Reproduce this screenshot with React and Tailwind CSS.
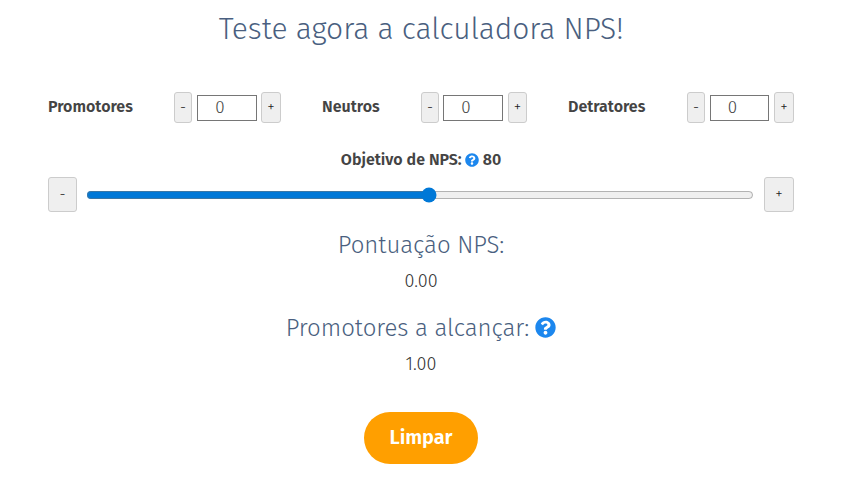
import React, { useState } from 'react';
import { FaQuestionCircle } from 'react-icons/fa';
import { clsx } from 'clsx';

const stepClass =
  'flex items-center justify-center rounded-[3px] border border-[#ccc] bg-[#efefef] text-[#222] text-[15px] font-light';

const fields = [
  { key: 'promotores', title: 'Promotores', label: 'w-[126px]', input: 'ml-[5px] w-[60px]', plus: 'ml-1 w-5' },
  { key: 'neutros', title: 'Neutros', label: 'w-[99px]', input: 'ml-1 w-[60px]', plus: 'ml-[5px] w-[19px]' },
  { key: 'detratores', title: 'Detratores', label: 'w-[119px]', input: 'ml-[5px] w-[59px]', plus: 'ml-[5px] w-5' },
];

const Counter = ({ field, value, onChange }) => (
  <div className="flex items-center">
    <span className={clsx('mb-px whitespace-nowrap text-[16px] leading-6 font-semibold text-[#444]', field.label)}>
      {field.title}
    </span>
    <button className={clsx(stepClass, 'h-[31px] w-[18px]')} onClick={() => onChange(Math.max(0, value - 1))}>
      -
    </button>
    <input
      className={clsx(
        'h-[26px] border border-[#767676] bg-white pr-[14px] text-center text-[17px] leading-6 font-light text-[#444]',
        field.input
      )}
      value={value}
      onChange={(e) => onChange(Number(e.target.value) || 0)}
    />
    <button className={clsx(stepClass, 'h-[31px]', field.plus)} onClick={() => onChange(value + 1)}>
      +
    </button>
  </div>
);

const App = () => {
  const [votes, setVotes] = useState({ promotores: 0, neutros: 0, detratores: 0 });
  const [goal, setGoal] = useState(80);

  const total = votes.promotores + votes.neutros + votes.detratores;
  const score = total ? ((votes.promotores - votes.detratores) / total) * 100 : 0;
  const g = goal / 100;
  const missing = total
    ? Math.max(0, Math.ceil((g * total - votes.promotores + votes.detratores) / (1 - g)))
    : 1;

  const clear = () => {
    setVotes({ promotores: 0, neutros: 0, detratores: 0 });
    setGoal(80);
  };

  return (
    <div className="h-[494px] overflow-hidden bg-white pl-12 font-['Fira_Sans','Noto_Sans',sans-serif]">
      <div className="flex w-[746px] flex-col items-center">
        <h2 className="mt-[9px] h-10 whitespace-nowrap text-[30px] leading-10 font-light tracking-[-0.08px] text-[#4a5f80]">
          Teste agora a calculadora NPS!
        </h2>

        <div className="mt-[43px] flex w-full justify-between">
          {fields.map((field) => (
            <Counter
              key={field.key}
              field={field}
              value={votes[field.key]}
              onChange={(v) => setVotes({ ...votes, [field.key]: v })}
            />
          ))}
        </div>

        <div className="mt-[25px] flex h-6 items-center whitespace-nowrap text-[16px] leading-6 font-semibold text-[#444]">
          <span>Objetivo de NPS:</span>
          <FaQuestionCircle className="mx-[3.5px] mb-px size-3.5 text-[#1c87ee]" />
          <span>{goal}</span>
        </div>

        <div className="mt-[5px] flex w-full items-center">
          <button className={clsx(stepClass, 'h-[35px] w-[29px]')} onClick={() => setGoal(Math.max(60, goal - 1))}>
            -
          </button>
          <input
            type="range"
            min="60"
            max="99"
            value={goal}
            onChange={(e) => setGoal(Number(e.target.value))}
            className="ml-[9.4px] h-4 w-[668px] accent-[#0078d7]"
          />
          <button className={clsx(stepClass, 'ml-auto h-[35px] w-[30px]')} onClick={() => setGoal(Math.min(99, goal + 1))}>
            +
          </button>
        </div>

        <h3 className="mt-[17px] h-8 whitespace-nowrap text-[24px] leading-8 font-light tracking-[-0.05px] text-[#4a5f80]">
          Pontuação NPS:
        </h3>
        <p className="mt-2 h-6 text-[18px] leading-6 font-light text-[#333]">{score.toFixed(2)}</p>

        <h3 className="mt-[19px] flex h-8 items-center whitespace-nowrap text-[24px] leading-8 font-light tracking-[-0.05px] text-[#4a5f80]">
          <span>Promotores a alcançar:</span>
          <FaQuestionCircle className="mb-px ml-1.5 size-[21px] text-[#1c87ee]" />
        </h3>
        <p className="mt-2 h-6 text-[18px] leading-6 font-light text-[#333]">{missing.toFixed(2)}</p>

        <button
          className="mt-9 h-[52px] w-[114px] rounded-full bg-[#ff9f00] pb-0.5 text-[20px] font-semibold tracking-[-0.1px] text-white"
          onClick={clear}
        >
          Limpar
        </button>
      </div>
    </div>
  );
};

export default App;
